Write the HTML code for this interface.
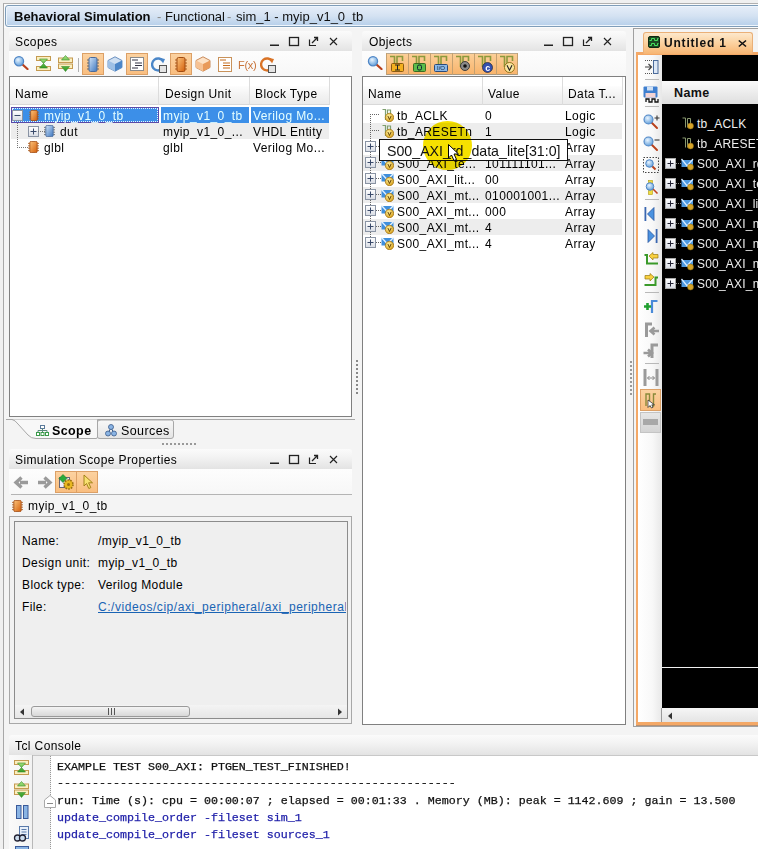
<!DOCTYPE html><html><head><meta charset="utf-8"><style>
*{margin:0;padding:0;box-sizing:border-box}
html,body{width:758px;height:849px;overflow:hidden;background:#f0f0f0;font-family:"Liberation Sans",sans-serif;font-size:12px;color:#000}
.a{position:absolute}
.t{position:absolute;white-space:nowrap;line-height:14px;letter-spacing:0.4px}
.ph{position:absolute;background:linear-gradient(#fbfbfb,#f3f3f3 40%,#e3e3e3)}
.tb{position:absolute;background:linear-gradient(#fdfdfd,#f7f7f7)}
.tbl{position:absolute;background:#fff;border:1px solid #808080}
.hdr{position:absolute;background:linear-gradient(#fdfdfd,#f3f3f3 50%,#ebebeb);border-bottom:1px solid #d8d8d8}
.cs{position:absolute;background:#dcdcdc}
.sel{position:absolute;background:#3c8fe8}
.alt{position:absolute;background:#ededed}
.tog{position:absolute;background:linear-gradient(#fcd2a0,#f9be80);border:1px solid #dca066}
.mono{font-family:"Liberation Mono",monospace;font-size:11.67px;line-height:14px}
svg{position:absolute;overflow:visible}
</style></head><body><svg width="0" height="0" style="position:absolute">
<defs>
<linearGradient id="gBlue" x1="0" y1="0" x2="1" y2="1"><stop offset="0" stop-color="#cfe2f7"/><stop offset="1" stop-color="#3f78c0"/></linearGradient>
<linearGradient id="gOr" x1="0" y1="0" x2="1" y2="1"><stop offset="0" stop-color="#fbc27a"/><stop offset="1" stop-color="#d4600c"/></linearGradient>
<linearGradient id="gGreen" x1="0" y1="0" x2="0" y2="1"><stop offset="0" stop-color="#9fe07a"/><stop offset="1" stop-color="#2f9a22"/></linearGradient>
<radialGradient id="gLens" cx="0.4" cy="0.35" r="0.7"><stop offset="0" stop-color="#e8f4ff"/><stop offset="1" stop-color="#5c9bd8"/></radialGradient>
<radialGradient id="gCoin" cx="0.4" cy="0.35" r="0.7"><stop offset="0" stop-color="#fff2a0"/><stop offset="1" stop-color="#d39a12"/></radialGradient>
<symbol id="mag" viewBox="0 0 16 14"><line x1="9.5" y1="8.5" x2="14.5" y2="13" stroke="#b8401c" stroke-width="2.2" stroke-linecap="round"/><circle cx="6" cy="5.2" r="4.6" fill="url(#gLens)" stroke="#4f86c6" stroke-width="1.2"/></symbol>
<symbol id="coll" viewBox="0 0 16 15"><rect x="0.5" y="0.5" width="14" height="4" fill="#fbefc0" stroke="#c49a50"/><rect x="0.5" y="10.5" width="14" height="4" fill="#fbefc0" stroke="#c49a50"/><path d="M3.5 3 L11.5 3 L7.5 7.5Z M3.5 12 L11.5 12 L7.5 7.5Z" fill="url(#gGreen)" stroke="#3a8a2a" stroke-width="0.6"/></symbol>
<symbol id="expd" viewBox="0 0 16 17"><rect x="0.5" y="3" width="14" height="4.5" fill="#fbefc0" stroke="#c49a50"/><rect x="0.5" y="9" width="14" height="4.5" fill="#fbefc0" stroke="#c49a50"/><path d="M3.5 5 L11.5 5 L7.5 0.5Z M3.5 11.5 L11.5 11.5 L7.5 16.5Z" fill="url(#gGreen)" stroke="#3a8a2a" stroke-width="0.6"/></symbol>
<symbol id="chipB" viewBox="0 0 12 15" preserveAspectRatio="none"><g stroke="#666" stroke-width="1"><line x1="0" y1="3" x2="2" y2="3"/><line x1="0" y1="6" x2="2" y2="6"/><line x1="0" y1="9" x2="2" y2="9"/><line x1="0" y1="12" x2="2" y2="12"/><line x1="10" y1="3" x2="12" y2="3"/><line x1="10" y1="6" x2="12" y2="6"/><line x1="10" y1="9" x2="12" y2="9"/><line x1="10" y1="12" x2="12" y2="12"/></g><rect x="2" y="0.5" width="8" height="14" rx="1.5" fill="url(#gBlue)" stroke="#4a6a9a"/></symbol>
<symbol id="chipO" viewBox="0 0 12 15" preserveAspectRatio="none"><g stroke="#b06020" stroke-width="1"><line x1="0" y1="3" x2="2" y2="3"/><line x1="0" y1="6" x2="2" y2="6"/><line x1="0" y1="9" x2="2" y2="9"/><line x1="0" y1="12" x2="2" y2="12"/><line x1="10" y1="3" x2="12" y2="3"/><line x1="10" y1="6" x2="12" y2="6"/><line x1="10" y1="9" x2="12" y2="9"/><line x1="10" y1="12" x2="12" y2="12"/></g><rect x="2" y="0.5" width="8" height="14" rx="1.5" fill="url(#gOr)" stroke="#a04a10"/></symbol>
<symbol id="cubeB" viewBox="0 0 16 16"><path d="M8 0.8 L15 4.5 L15 11.5 L8 15.2 L1 11.5 L1 4.5Z" fill="#cfe0f2" stroke="#6a8fbf"/><path d="M8 8 L15 4.5 L15 11.5 L8 15.2Z" fill="#4b86c8"/><path d="M1 4.5 L8 8 L8 15.2 L1 11.5Z" fill="#9dc0e6"/></symbol>
<symbol id="cubeO" viewBox="0 0 16 16"><path d="M8 0.8 L15 4.5 L15 11.5 L8 15.2 L1 11.5 L1 4.5Z" fill="#fde2c6" stroke="#c88a5a"/><path d="M8 8 L15 4.5 L15 11.5 L8 15.2Z" fill="#e99a5a"/><path d="M1 4.5 L8 8 L8 15.2 L1 11.5Z" fill="#f6c294"/></symbol>
<symbol id="page" viewBox="0 0 14 14"><rect x="0.5" y="0.5" width="13" height="13" fill="#fff" stroke="#8a8a8a"/><g stroke="#334" stroke-width="1"><line x1="2" y1="3" x2="8" y2="3"/><line x1="5" y1="6" x2="12" y2="6"/><line x1="5" y1="8.5" x2="12" y2="8.5"/><line x1="2" y1="11" x2="8" y2="11"/></g></symbol>
<symbol id="pageO" viewBox="0 0 14 15"><rect x="0.5" y="0.5" width="13" height="14" fill="#fff" stroke="#c9925a"/><g stroke="#c56a1a" stroke-width="1"><line x1="2" y1="3" x2="8" y2="3"/><line x1="5" y1="6" x2="12" y2="6"/><line x1="5" y1="8.5" x2="12" y2="8.5"/><line x1="5" y1="11" x2="12" y2="11"/></g></symbol>
<symbol id="refB" viewBox="0 0 16 16"><path d="M12 4 A6 6 0 1 0 11 12" fill="none" stroke="#4a86c8" stroke-width="2.4"/><path d="M9 1 L14 2 L12 6.5Z" fill="#4a86c8"/><rect x="8.5" y="8.5" width="7" height="7" fill="#e4e4e4" stroke="#555"/></symbol>
<symbol id="refO" viewBox="0 0 16 16"><path d="M12 4 A6 6 0 1 0 11 12" fill="none" stroke="#d97326" stroke-width="2.4"/><path d="M9 1 L14 2 L12 6.5Z" fill="#d97326"/><rect x="8.5" y="8.5" width="7" height="7" fill="#e4e4e4" stroke="#555"/></symbol>
<symbol id="plus" viewBox="0 0 11 11"><rect x="0.5" y="0.5" width="10" height="10" fill="url(#gBox)" stroke="#8a94a4"/><path d="M2.5 5.5 H8.5 M5.5 2.5 V8.5" stroke="#3a4a6a" stroke-width="1"/></symbol>
<symbol id="minus" viewBox="0 0 11 11"><rect x="0.5" y="0.5" width="10" height="10" fill="url(#gBox)" stroke="#8a94a4"/><path d="M2.5 5.5 H8.5" stroke="#3a4a6a" stroke-width="1"/></symbol>
<linearGradient id="gBox" x1="0" y1="0" x2="0" y2="1"><stop offset="0" stop-color="#ffffff"/><stop offset="1" stop-color="#d8dce4"/></linearGradient>
<symbol id="sig" viewBox="0 0 13 13"><path d="M1.5 0.5 H4.5 V11 M6.5 11 V1 H9.5 V5" fill="none" stroke="#7fa070" stroke-width="1.2"/><circle cx="8.5" cy="8.5" r="4.2" fill="url(#gCoin)" stroke="#a07010" stroke-width="0.7"/><path d="M6.9 7 L8.5 10.5 L10.1 7" fill="none" stroke="#5a3a00" stroke-width="0.9"/></symbol>
<symbol id="arr" viewBox="0 0 13 13"><path d="M0.5 1 L12.5 1 L12.5 8.5 L0.5 8.5Z" fill="#3f8fdc"/><path d="M0.5 0.5 L6.5 7 L12.5 0.5" fill="none" stroke="#dff0ff" stroke-width="1.4"/><circle cx="8.5" cy="8.5" r="4.2" fill="url(#gCoin)" stroke="#a07010" stroke-width="0.7"/><path d="M6.9 7 L8.5 10.5 L10.1 7" fill="none" stroke="#5a3a00" stroke-width="0.9"/></symbol>
</defs></svg>
<div class="a" style="left:3px;top:3px;width:760px;height:850px;border-left:1px solid #a8a8a8;border-top:1px solid #b0b0b0;background:#f4f4f4"></div>
<div class="a" style="left:4px;top:4px;width:760px;height:24px;background:#fbfbfb"></div>
<div class="a" style="left:5px;top:5px;width:760px;height:22px;border:1px solid #7f9db9;border-radius:3px;box-shadow:inset 0 0 0 1px #eef5fc;background:linear-gradient(#e6eef9,#d4e2f2 50%,#b6cfea)"></div>
<div class="t" style="left:14px;top:10px;font-size:13px;font-weight:bold;color:#0b0b0b;letter-spacing:0">Behavioral Simulation</div>
<div class="t" style="left:157px;top:10px;font-size:13px;color:#8a8a8a;letter-spacing:0">-</div>
<div class="t" style="left:165px;top:10px;font-size:13px;color:#111;letter-spacing:0">Functional</div>
<div class="t" style="left:227px;top:10px;font-size:13px;color:#8a8a8a;letter-spacing:0">-</div>
<div class="t" style="left:236px;top:10px;font-size:13px;color:#111;letter-spacing:0">sim_1 - myip_v1_0_tb</div>
<div class="ph" style="left:9px;top:31px;width:343px;height:20px;border-radius:3px 3px 0 0"></div>
<div class="t" style="left:15px;top:35px;">Scopes</div>
<svg style="left:270px;top:36px" width="70" height="12" viewBox="0 0 70 12"><rect x="0" y="8.5" width="9" height="1.5" fill="#222"/><rect x="19.5" y="1.5" width="9" height="8" fill="none" stroke="#222" stroke-width="1.3"/><path d="M39.5 3.5 V9.5 H46" fill="none" stroke="#222" stroke-width="1.2"/><path d="M42 7 L47 2 M44 1.5 H47.5 V5" fill="none" stroke="#222" stroke-width="1.3"/><path d="M60 2 L67 9 M67 2 L60 9" stroke="#222" stroke-width="1.15"/></svg>
<div class="tb" style="left:9px;top:51px;width:343px;height:25px;"></div>
<svg style="left:13px;top:56px" width="16" height="14"><use href="#mag" width="16" height="14"/></svg>
<svg style="left:36px;top:56px" width="16" height="15"><use href="#coll" width="16" height="15"/></svg>
<svg style="left:58px;top:55px" width="16" height="17"><use href="#expd" width="16" height="17"/></svg>
<div class="a" style="left:78px;top:58px;width:1px;height:14px;background:#b0b0b0"></div>
<div class="tog" style="left:82px;top:53px;width:22px;height:22px;"></div>
<svg style="left:87px;top:57px" width="12" height="15"><use href="#chipB" width="12" height="15"/></svg>
<svg style="left:107px;top:56px" width="16" height="16"><use href="#cubeB" width="16" height="16"/></svg>
<div class="tog" style="left:126px;top:53px;width:22px;height:22px;"></div>
<svg style="left:130px;top:57px" width="14" height="14"><use href="#page" width="14" height="14"/></svg>
<svg style="left:151px;top:57px" width="16" height="16"><use href="#refB" width="16" height="16"/></svg>
<div class="tog" style="left:170px;top:53px;width:22px;height:22px;"></div>
<svg style="left:175px;top:57px" width="12" height="15"><use href="#chipO" width="12" height="15"/></svg>
<svg style="left:195px;top:56px" width="16" height="16"><use href="#cubeO" width="16" height="16"/></svg>
<svg style="left:218px;top:57px" width="14" height="15"><use href="#pageO" width="14" height="15"/></svg>
<div class="t" style="left:238px;top:58px;font-size:11px;color:#c8743a;letter-spacing:-0.3px">F(x)</div>
<svg style="left:260px;top:57px" width="16" height="16"><use href="#refO" width="16" height="16"/></svg>
<div class="tbl" style="left:9px;top:76px;width:343px;height:341px;"></div>
<div class="hdr" style="left:10px;top:86px;width:319px;height:19px;"></div>
<div class="cs" style="left:158px;top:77px;width:1px;height:28px;"></div>
<div class="cs" style="left:249px;top:77px;width:1px;height:28px;"></div>
<div class="cs" style="left:329px;top:77px;width:1px;height:28px;"></div>
<div class="t" style="left:15px;top:87px;">Name</div>
<div class="t" style="left:165px;top:87px;">Design Unit</div>
<div class="t" style="left:255px;top:87px;">Block Type</div>
<div class="sel" style="left:11px;top:107px;width:148px;height:16px;border:1px solid #5a4aa8"></div>
<div class="a" style="left:12px;top:108px;width:146px;height:14px;border:1px dotted #e8f4ff"></div>
<div class="sel" style="left:161px;top:107px;width:88px;height:16px;"></div>
<div class="sel" style="left:251px;top:107px;width:78px;height:16px;"></div>
<div class="alt" style="left:11px;top:123px;width:318px;height:16px;"></div>
<svg style="left:12px;top:110px" width="11" height="11"><use href="#minus" width="11" height="11"/></svg>
<svg style="left:29px;top:110px" width="10" height="11"><use href="#chipO" width="10" height="11"/></svg>
<div class="t" style="left:44px;top:109px;color:#e6ffff">myip_v1_0_tb</div>
<div class="t" style="left:163px;top:109px;color:#e6ffff">myip_v1_0_tb</div>
<div class="t" style="left:253px;top:109px;color:#e6ffff">Verilog Mo...</div>
<svg style="left:16px;top:122px" width="20" height="30" viewBox="0 0 20 30"><path d="M1.5 1 V25 M1 25.5 H13" stroke="#777" stroke-width="1" stroke-dasharray="1 1" fill="none"/></svg>
<svg style="left:28px;top:126px" width="11" height="11"><use href="#plus" width="11" height="11"/></svg>
<svg style="left:38px;top:131px" width="8" height="1" viewBox="0 0 8 1"><path d="M0 0.5 H8" stroke="#777" stroke-dasharray="1 1"/></svg>
<svg style="left:44px;top:125px" width="11" height="12"><use href="#chipB" width="11" height="12"/></svg>
<div class="t" style="left:60px;top:125px;">dut</div>
<div class="t" style="left:163px;top:125px;">myip_v1_0_...</div>
<div class="t" style="left:253px;top:125px;">VHDL Entity</div>
<svg style="left:28px;top:141px" width="11" height="12"><use href="#chipO" width="11" height="12"/></svg>
<div class="t" style="left:44px;top:141px;">glbl</div>
<div class="t" style="left:163px;top:141px;">glbl</div>
<div class="t" style="left:253px;top:141px;">Verilog Mo...</div>
<svg style="left:356px;top:360px" width="2" height="36" viewBox="0 0 2 36"><path d="M1 0 V36" stroke="#888" stroke-width="2" stroke-dasharray="2 2"/></svg>
<div class="a" style="left:8px;top:419px;width:347px;height:1px;background:#a8a8a8"></div>
<svg style="left:6px;top:419px" width="172" height="21" viewBox="0 0 172 21"><path d="M0 0.5 L6 0.5 Q9 1 12 5 L22 16 Q25 19.5 30 19.5 L90 19.5 Q91.5 19.5 91.5 18 L91.5 0.5" fill="#f8f8f8" stroke="#a8a8a8"/><path d="M91.5 1.5 L91.5 18 Q91.5 19.5 94 19.5 L165 19.5 Q167.5 19.5 167.5 17 L167.5 3 Q167.5 1 165 1 L95 1 Q91.5 1 91.5 3" fill="url(#gTab)" stroke="#a8a8a8"/></svg>
<svg width="0" height="0" style="position:absolute"><defs><linearGradient id="gTab" x1="0" y1="0" x2="0" y2="1"><stop offset="0" stop-color="#f8f8f8"/><stop offset="1" stop-color="#e4e4e4"/></linearGradient></defs></svg>
<svg style="left:36px;top:425px" width="13" height="11" viewBox="0 0 13 11"><rect x="4.5" y="0.5" width="4" height="3" fill="#fff" stroke="#5a7a9a" stroke-width="1"/><path d="M6.5 3.5 V5.5 M2 5.5 H11 M2 5.5 V7 M6.5 5.5 V7 M11 5.5 V7" stroke="#5a8a7a" stroke-width="1" fill="none"/><g fill="#fff" stroke="#3a9a4a" stroke-width="1"><rect x="0.5" y="7.5" width="3" height="3"/><rect x="5" y="7.5" width="3" height="3"/><rect x="9.5" y="7.5" width="3" height="3"/></g></svg>
<div class="t" style="left:52px;top:424px;font-weight:bold;font-size:12.5px">Scope</div>
<svg style="left:105px;top:424px" width="12" height="13" viewBox="0 0 12 13"><path d="M6 4 L3 9 M6 4 L9 9" stroke="#3a5a8a" stroke-width="1"/><circle cx="6" cy="3" r="2.5" fill="#8ab4e4" stroke="#3a5a8a" stroke-width="0.8"/><circle cx="3" cy="9.5" r="2.5" fill="#8ab4e4" stroke="#3a5a8a" stroke-width="0.8"/><circle cx="9" cy="9.5" r="2.5" fill="#8ab4e4" stroke="#3a5a8a" stroke-width="0.8"/></svg>
<div class="t" style="left:121px;top:424px;font-size:12.5px">Sources</div>
<svg style="left:162px;top:443px" width="36" height="2" viewBox="0 0 36 2"><path d="M0 1 H36" stroke="#999" stroke-width="2" stroke-dasharray="2 2"/></svg>
<div class="ph" style="left:362px;top:31px;width:264px;height:20px;border-radius:3px 3px 0 0"></div>
<div class="t" style="left:369px;top:35px;">Objects</div>
<svg style="left:544px;top:36px" width="70" height="12" viewBox="0 0 70 12"><rect x="0" y="8.5" width="9" height="1.5" fill="#222"/><rect x="19.5" y="1.5" width="9" height="8" fill="none" stroke="#222" stroke-width="1.3"/><path d="M39.5 3.5 V9.5 H46" fill="none" stroke="#222" stroke-width="1.2"/><path d="M42 7 L47 2 M44 1.5 H47.5 V5" fill="none" stroke="#222" stroke-width="1.3"/><path d="M60 2 L67 9 M67 2 L60 9" stroke="#222" stroke-width="1.15"/></svg>
<div class="tb" style="left:362px;top:51px;width:264px;height:25px;"></div>
<svg style="left:367px;top:56px" width="16" height="14"><use href="#mag" width="16" height="14"/></svg>
<div class="a" style="left:386px;top:53px;width:132px;height:22px;background:linear-gradient(#fccf98,#f8b46c);border-top:1px solid #b8a890;border-bottom:1px solid #a89880"></div>
<div class="a" style="left:386px;top:53px;width:1px;height:22px;background:#c4a070"></div>
<div class="a" style="left:408px;top:53px;width:1px;height:22px;background:#c4a070"></div>
<div class="a" style="left:430px;top:53px;width:1px;height:22px;background:#c4a070"></div>
<div class="a" style="left:452px;top:53px;width:1px;height:22px;background:#c4a070"></div>
<div class="a" style="left:474px;top:53px;width:1px;height:22px;background:#c4a070"></div>
<div class="a" style="left:496px;top:53px;width:1px;height:22px;background:#c4a070"></div>
<div class="a" style="left:517px;top:53px;width:1px;height:22px;background:#c4a070"></div>
<div class="tbl" style="left:362px;top:76px;width:264px;height:649px;"></div>
<div class="hdr" style="left:363px;top:86px;width:259px;height:19px;"></div>
<div class="cs" style="left:482px;top:77px;width:1px;height:28px;"></div>
<div class="cs" style="left:562px;top:77px;width:1px;height:28px;"></div>
<div class="cs" style="left:622px;top:77px;width:1px;height:28px;"></div>
<div class="t" style="left:368px;top:87px;">Name</div>
<div class="t" style="left:488px;top:87px;">Value</div>
<div class="t" style="left:568px;top:87px;">Data T...</div>
<svg style="left:389px;top:55px" width="14" height="13" viewBox="0 0 14 13"><path d="M1 1.5 H5.5 V12 M8 10 V1.5 H13.5 V6" fill="none" stroke="#8c9a3c" stroke-width="1.6"/></svg>
<svg style="left:411px;top:55px" width="14" height="13" viewBox="0 0 14 13"><path d="M1 1.5 H5.5 V12 M8 10 V1.5 H13.5 V6" fill="none" stroke="#8c9a3c" stroke-width="1.6"/></svg>
<svg style="left:433px;top:55px" width="14" height="13" viewBox="0 0 14 13"><path d="M1 1.5 H5.5 V12 M8 10 V1.5 H13.5 V6" fill="none" stroke="#8c9a3c" stroke-width="1.6"/></svg>
<svg style="left:455px;top:55px" width="14" height="13" viewBox="0 0 14 13"><path d="M1 1.5 H5.5 V12 M8 10 V1.5 H13.5 V6" fill="none" stroke="#8c9a3c" stroke-width="1.6"/></svg>
<svg style="left:477px;top:55px" width="14" height="13" viewBox="0 0 14 13"><path d="M1 1.5 H5.5 V12 M8 10 V1.5 H13.5 V6" fill="none" stroke="#8c9a3c" stroke-width="1.6"/></svg>
<svg style="left:499px;top:55px" width="14" height="13" viewBox="0 0 14 13"><path d="M1 1.5 H5.5 V12 M8 10 V1.5 H13.5 V6" fill="none" stroke="#8c9a3c" stroke-width="1.6"/></svg>
<svg style="left:391px;top:63px" width="13" height="9" viewBox="0 0 13 9"><rect x="0.5" y="0.5" width="12" height="8" rx="1" fill="#f4b020" stroke="#8a5a10"/><path d="M4 2 H9 M6.5 2 V7 M4 7 H9" stroke="#222" stroke-width="1"/></svg>
<svg style="left:413px;top:63px" width="13" height="9" viewBox="0 0 13 9"><rect x="0.5" y="0.5" width="12" height="8" rx="1" fill="#5cbc4c" stroke="#3a6a20"/><rect x="4.5" y="2" width="4" height="5" rx="1.5" fill="none" stroke="#123" stroke-width="1"/></svg>
<svg style="left:434px;top:64px" width="14" height="8" viewBox="0 0 14 8"><rect x="0.5" y="0.5" width="13" height="7" rx="1" fill="#8ab8e8" stroke="#2a4a7a"/><text x="7" y="6.3" font-size="6" text-anchor="middle" fill="#123" font-family="Liberation Sans">I/O</text></svg>
<svg style="left:460px;top:61px" width="10" height="10" viewBox="0 0 10 10"><circle cx="5" cy="5" r="4.5" fill="#8a8a8a" stroke="#333" stroke-width="0.9"/><circle cx="5" cy="5" r="1.8" fill="#111"/></svg>
<svg style="left:482px;top:62px" width="11" height="11" viewBox="0 0 11 11"><circle cx="5.5" cy="5.5" r="5" fill="#3450b0" stroke="#223" stroke-width="0.7"/><text x="5.7" y="8.6" font-size="9" text-anchor="middle" fill="#fff" font-weight="bold" font-family="Liberation Sans">c</text></svg>
<svg style="left:504px;top:62px" width="11" height="11" viewBox="0 0 11 11"><circle cx="5.5" cy="5.5" r="5" fill="#fbe6a0" stroke="#8a6a10" stroke-width="0.9"/><path d="M3 3.2 L5.5 8.3 L8 3.2" fill="none" stroke="#222" stroke-width="1.1"/></svg>
<div class="alt" style="left:363px;top:123px;width:259px;height:16px;"></div>
<div class="alt" style="left:363px;top:155px;width:259px;height:16px;"></div>
<div class="alt" style="left:363px;top:187px;width:259px;height:16px;"></div>
<div class="alt" style="left:363px;top:219px;width:259px;height:16px;"></div>
<svg style="left:370px;top:114px" width="10" height="128" viewBox="0 0 10 128"><path d="M0.5 0 V126 M0 0.5 H9 M0 16.5 H9" stroke="#666" stroke-dasharray="1 1" fill="none"/></svg>
<svg style="left:381px;top:109px" width="13" height="13"><use href="#sig" width="13" height="13"/></svg>
<div class="t" style="left:397px;top:109px;">tb_ACLK</div>
<div class="t" style="left:485px;top:109px;">0</div>
<div class="t" style="left:565px;top:109px;">Logic</div>
<svg style="left:381px;top:125px" width="13" height="13"><use href="#sig" width="13" height="13"/></svg>
<div class="t" style="left:397px;top:125px;">tb_ARESETn</div>
<div class="t" style="left:485px;top:125px;">1</div>
<div class="t" style="left:565px;top:125px;">Logic</div>
<svg style="left:365px;top:141px" width="11" height="11"><use href="#plus" width="11" height="11"/></svg>
<svg style="left:376px;top:146px" width="5" height="1" viewBox="0 0 5 1"><path d="M0 0.5 H5" stroke="#666" stroke-dasharray="1 1"/></svg>
<svg style="left:381px;top:141px" width="13" height="13"><use href="#arr" width="13" height="13"/></svg>
<div class="t" style="left:397px;top:141px;">S00_AXI_rd...</div>
<div class="t" style="left:485px;top:141px;"></div>
<div class="t" style="left:565px;top:141px;">Array</div>
<svg style="left:365px;top:157px" width="11" height="11"><use href="#plus" width="11" height="11"/></svg>
<svg style="left:376px;top:162px" width="5" height="1" viewBox="0 0 5 1"><path d="M0 0.5 H5" stroke="#666" stroke-dasharray="1 1"/></svg>
<svg style="left:381px;top:157px" width="13" height="13"><use href="#arr" width="13" height="13"/></svg>
<div class="t" style="left:397px;top:157px;">S00_AXI_te...</div>
<div class="t" style="left:485px;top:157px;">101111101...</div>
<div class="t" style="left:565px;top:157px;">Array</div>
<svg style="left:365px;top:173px" width="11" height="11"><use href="#plus" width="11" height="11"/></svg>
<svg style="left:376px;top:178px" width="5" height="1" viewBox="0 0 5 1"><path d="M0 0.5 H5" stroke="#666" stroke-dasharray="1 1"/></svg>
<svg style="left:381px;top:173px" width="13" height="13"><use href="#arr" width="13" height="13"/></svg>
<div class="t" style="left:397px;top:173px;">S00_AXI_lit...</div>
<div class="t" style="left:485px;top:173px;">00</div>
<div class="t" style="left:565px;top:173px;">Array</div>
<svg style="left:365px;top:189px" width="11" height="11"><use href="#plus" width="11" height="11"/></svg>
<svg style="left:376px;top:194px" width="5" height="1" viewBox="0 0 5 1"><path d="M0 0.5 H5" stroke="#666" stroke-dasharray="1 1"/></svg>
<svg style="left:381px;top:189px" width="13" height="13"><use href="#arr" width="13" height="13"/></svg>
<div class="t" style="left:397px;top:189px;">S00_AXI_mt...</div>
<div class="t" style="left:485px;top:189px;">010001001...</div>
<div class="t" style="left:565px;top:189px;">Array</div>
<svg style="left:365px;top:205px" width="11" height="11"><use href="#plus" width="11" height="11"/></svg>
<svg style="left:376px;top:210px" width="5" height="1" viewBox="0 0 5 1"><path d="M0 0.5 H5" stroke="#666" stroke-dasharray="1 1"/></svg>
<svg style="left:381px;top:205px" width="13" height="13"><use href="#arr" width="13" height="13"/></svg>
<div class="t" style="left:397px;top:205px;">S00_AXI_mt...</div>
<div class="t" style="left:485px;top:205px;">000</div>
<div class="t" style="left:565px;top:205px;">Array</div>
<svg style="left:365px;top:221px" width="11" height="11"><use href="#plus" width="11" height="11"/></svg>
<svg style="left:376px;top:226px" width="5" height="1" viewBox="0 0 5 1"><path d="M0 0.5 H5" stroke="#666" stroke-dasharray="1 1"/></svg>
<svg style="left:381px;top:221px" width="13" height="13"><use href="#arr" width="13" height="13"/></svg>
<div class="t" style="left:397px;top:221px;">S00_AXI_mt...</div>
<div class="t" style="left:485px;top:221px;">4</div>
<div class="t" style="left:565px;top:221px;">Array</div>
<svg style="left:365px;top:237px" width="11" height="11"><use href="#plus" width="11" height="11"/></svg>
<svg style="left:376px;top:242px" width="5" height="1" viewBox="0 0 5 1"><path d="M0 0.5 H5" stroke="#666" stroke-dasharray="1 1"/></svg>
<svg style="left:381px;top:237px" width="13" height="13"><use href="#arr" width="13" height="13"/></svg>
<div class="t" style="left:397px;top:237px;">S00_AXI_mt...</div>
<div class="t" style="left:485px;top:237px;">4</div>
<div class="t" style="left:565px;top:237px;">Array</div>
<div class="a" style="left:423px;top:121px;width:49px;height:49px;border-radius:50%;background:#f6e100;mix-blend-mode:multiply"></div>
<div class="a" style="left:379px;top:139px;width:189px;height:22px;background:#fff;border:1px solid #111"></div>
<div class="a" style="left:423px;top:121px;width:49px;height:49px;border-radius:50%;background:#f6e100;mix-blend-mode:multiply;clip-path:inset(18px 0 9px 0)"></div>
<div class="t" style="left:387px;top:143px;font-size:14.2px;line-height:16px;color:#111;letter-spacing:0">S00_AXI_rd_data_lite[31:0]</div>
<svg style="left:448px;top:144px" width="12" height="18" viewBox="0 0 12 18"><path d="M0.5 0.5 L0.5 14 L3.5 11 L6 16.5 L8.5 15.5 L6 10 L10.5 10Z" fill="#fff" stroke="#000" stroke-width="1"/></svg>
<div class="a" style="left:633px;top:28px;width:130px;height:699px;border:1px solid #a0a0a0;background:#f4f4f4"></div>
<div class="a" style="left:636px;top:52px;width:130px;height:674px;background:#f4a866;border-bottom:1px solid #b89070"></div>
<div class="a" style="left:643px;top:32px;width:110px;height:22px;background:linear-gradient(#fde8cc,#fbd3a2 45%,#f7b572);border-radius:3px 3px 0 0;border:1px solid #eab078;border-bottom:none"></div>
<svg style="left:648px;top:36px" width="12" height="12" viewBox="0 0 12 12"><rect x="0.5" y="0.5" width="11" height="11" rx="1.5" fill="#1d4a24" stroke="#0e2a10"/><path d="M1.5 4.5 H3.5 V2.5 H6.5 V4.5 H9.5 V2.5 H10.5 M1.5 9.5 H3.5 V7.5 H6.5 V9.5 H9.5 V7.5 H10.5" stroke="#46e060" stroke-width="1" fill="none"/></svg>
<div class="t" style="left:664px;top:36px;font-weight:bold;color:#111;letter-spacing:0.8px">Untitled 1</div>
<svg style="left:738px;top:40px" width="9" height="7" viewBox="0 0 9 7"><path d="M0.8 0.5 L8 6.5 M8 0.5 L0.8 6.5" stroke="#111" stroke-width="1.6"/></svg>
<div class="a" style="left:638px;top:55px;width:24px;height:667px;background:linear-gradient(90deg,#fff,#f8f8f8 60%,#e8e8e8)"></div>
<div class="a" style="left:661px;top:708px;width:1px;height:14px;background:#9a9a9a"></div>
<div class="a" style="left:662px;top:55px;width:100px;height:653px;background:#000"></div>
<div class="a" style="left:662px;top:81px;width:100px;height:23px;background:linear-gradient(#fafafa,#ececec 50%,#dedede)"></div>
<div class="t" style="left:674px;top:86px;font-weight:bold;font-size:12.5px;color:#111">Name</div>
<svg style="left:681px;top:117px" width="13" height="13" viewBox="0 0 13 13"><path d="M1.5 1 H4.5 V10.5 M6.5 10.5 V1.5 H9.5 V6" fill="none" stroke="#8a9a70" stroke-width="1"/><circle cx="9.5" cy="9" r="3" fill="#d7a52a" stroke="#8a6a10" stroke-width="0.5"/></svg>
<div class="t" style="left:697px;top:117px;color:#eee;letter-spacing:0.2px">tb_ACLK</div>
<svg style="left:681px;top:137px" width="13" height="13" viewBox="0 0 13 13"><path d="M1.5 1 H4.5 V10.5 M6.5 10.5 V1.5 H9.5 V6" fill="none" stroke="#8a9a70" stroke-width="1"/><circle cx="9.5" cy="9" r="3" fill="#d7a52a" stroke="#8a6a10" stroke-width="0.5"/></svg>
<div class="t" style="left:697px;top:137px;color:#eee;letter-spacing:0.2px">tb_ARESETn</div>
<svg style="left:665px;top:158px" width="11" height="11" viewBox="0 0 11 11"><rect x="0.5" y="0.5" width="10" height="10" fill="url(#gBox)" stroke="#aaa"/><path d="M2.5 5.5 H8.5 M5.5 2.5 V8.5" stroke="#223" stroke-width="1"/></svg>
<svg style="left:676px;top:163px" width="5" height="1" viewBox="0 0 5 1"><path d="M0 0.5 H5" stroke="#888" stroke-dasharray="1 1"/></svg>
<svg style="left:681px;top:158px" width="13" height="12" viewBox="0 0 13 12"><path d="M0.5 2 L12 2 L12 9 L0.5 9Z" fill="#4f9ae0"/><path d="M0.5 1 L6.2 8 L12 1" fill="none" stroke="#d8ecff" stroke-width="1.3"/><circle cx="9.5" cy="9" r="3" fill="#d7a52a" stroke="#8a6a10" stroke-width="0.5"/></svg>
<div class="t" style="left:697px;top:157px;color:#eee;letter-spacing:0.2px">S00_AXI_rd</div>
<svg style="left:665px;top:178px" width="11" height="11" viewBox="0 0 11 11"><rect x="0.5" y="0.5" width="10" height="10" fill="url(#gBox)" stroke="#aaa"/><path d="M2.5 5.5 H8.5 M5.5 2.5 V8.5" stroke="#223" stroke-width="1"/></svg>
<svg style="left:676px;top:183px" width="5" height="1" viewBox="0 0 5 1"><path d="M0 0.5 H5" stroke="#888" stroke-dasharray="1 1"/></svg>
<svg style="left:681px;top:178px" width="13" height="12" viewBox="0 0 13 12"><path d="M0.5 2 L12 2 L12 9 L0.5 9Z" fill="#4f9ae0"/><path d="M0.5 1 L6.2 8 L12 1" fill="none" stroke="#d8ecff" stroke-width="1.3"/><circle cx="9.5" cy="9" r="3" fill="#d7a52a" stroke="#8a6a10" stroke-width="0.5"/></svg>
<div class="t" style="left:697px;top:177px;color:#eee;letter-spacing:0.2px">S00_AXI_te</div>
<svg style="left:665px;top:198px" width="11" height="11" viewBox="0 0 11 11"><rect x="0.5" y="0.5" width="10" height="10" fill="url(#gBox)" stroke="#aaa"/><path d="M2.5 5.5 H8.5 M5.5 2.5 V8.5" stroke="#223" stroke-width="1"/></svg>
<svg style="left:676px;top:203px" width="5" height="1" viewBox="0 0 5 1"><path d="M0 0.5 H5" stroke="#888" stroke-dasharray="1 1"/></svg>
<svg style="left:681px;top:198px" width="13" height="12" viewBox="0 0 13 12"><path d="M0.5 2 L12 2 L12 9 L0.5 9Z" fill="#4f9ae0"/><path d="M0.5 1 L6.2 8 L12 1" fill="none" stroke="#d8ecff" stroke-width="1.3"/><circle cx="9.5" cy="9" r="3" fill="#d7a52a" stroke="#8a6a10" stroke-width="0.5"/></svg>
<div class="t" style="left:697px;top:197px;color:#eee;letter-spacing:0.2px">S00_AXI_lit</div>
<svg style="left:665px;top:218px" width="11" height="11" viewBox="0 0 11 11"><rect x="0.5" y="0.5" width="10" height="10" fill="url(#gBox)" stroke="#aaa"/><path d="M2.5 5.5 H8.5 M5.5 2.5 V8.5" stroke="#223" stroke-width="1"/></svg>
<svg style="left:676px;top:223px" width="5" height="1" viewBox="0 0 5 1"><path d="M0 0.5 H5" stroke="#888" stroke-dasharray="1 1"/></svg>
<svg style="left:681px;top:218px" width="13" height="12" viewBox="0 0 13 12"><path d="M0.5 2 L12 2 L12 9 L0.5 9Z" fill="#4f9ae0"/><path d="M0.5 1 L6.2 8 L12 1" fill="none" stroke="#d8ecff" stroke-width="1.3"/><circle cx="9.5" cy="9" r="3" fill="#d7a52a" stroke="#8a6a10" stroke-width="0.5"/></svg>
<div class="t" style="left:697px;top:217px;color:#eee;letter-spacing:0.2px">S00_AXI_mt</div>
<svg style="left:665px;top:238px" width="11" height="11" viewBox="0 0 11 11"><rect x="0.5" y="0.5" width="10" height="10" fill="url(#gBox)" stroke="#aaa"/><path d="M2.5 5.5 H8.5 M5.5 2.5 V8.5" stroke="#223" stroke-width="1"/></svg>
<svg style="left:676px;top:243px" width="5" height="1" viewBox="0 0 5 1"><path d="M0 0.5 H5" stroke="#888" stroke-dasharray="1 1"/></svg>
<svg style="left:681px;top:238px" width="13" height="12" viewBox="0 0 13 12"><path d="M0.5 2 L12 2 L12 9 L0.5 9Z" fill="#4f9ae0"/><path d="M0.5 1 L6.2 8 L12 1" fill="none" stroke="#d8ecff" stroke-width="1.3"/><circle cx="9.5" cy="9" r="3" fill="#d7a52a" stroke="#8a6a10" stroke-width="0.5"/></svg>
<div class="t" style="left:697px;top:237px;color:#eee;letter-spacing:0.2px">S00_AXI_mt</div>
<svg style="left:665px;top:258px" width="11" height="11" viewBox="0 0 11 11"><rect x="0.5" y="0.5" width="10" height="10" fill="url(#gBox)" stroke="#aaa"/><path d="M2.5 5.5 H8.5 M5.5 2.5 V8.5" stroke="#223" stroke-width="1"/></svg>
<svg style="left:676px;top:263px" width="5" height="1" viewBox="0 0 5 1"><path d="M0 0.5 H5" stroke="#888" stroke-dasharray="1 1"/></svg>
<svg style="left:681px;top:258px" width="13" height="12" viewBox="0 0 13 12"><path d="M0.5 2 L12 2 L12 9 L0.5 9Z" fill="#4f9ae0"/><path d="M0.5 1 L6.2 8 L12 1" fill="none" stroke="#d8ecff" stroke-width="1.3"/><circle cx="9.5" cy="9" r="3" fill="#d7a52a" stroke="#8a6a10" stroke-width="0.5"/></svg>
<div class="t" style="left:697px;top:257px;color:#eee;letter-spacing:0.2px">S00_AXI_mt</div>
<svg style="left:665px;top:278px" width="11" height="11" viewBox="0 0 11 11"><rect x="0.5" y="0.5" width="10" height="10" fill="url(#gBox)" stroke="#aaa"/><path d="M2.5 5.5 H8.5 M5.5 2.5 V8.5" stroke="#223" stroke-width="1"/></svg>
<svg style="left:676px;top:283px" width="5" height="1" viewBox="0 0 5 1"><path d="M0 0.5 H5" stroke="#888" stroke-dasharray="1 1"/></svg>
<svg style="left:681px;top:278px" width="13" height="12" viewBox="0 0 13 12"><path d="M0.5 2 L12 2 L12 9 L0.5 9Z" fill="#4f9ae0"/><path d="M0.5 1 L6.2 8 L12 1" fill="none" stroke="#d8ecff" stroke-width="1.3"/><circle cx="9.5" cy="9" r="3" fill="#d7a52a" stroke="#8a6a10" stroke-width="0.5"/></svg>
<div class="t" style="left:697px;top:277px;color:#eee;letter-spacing:0.2px">S00_AXI_mt</div>
<div class="a" style="left:662px;top:667px;width:100px;height:1px;background:#f0f0f0"></div>
<div class="a" style="left:662px;top:708px;width:100px;height:14px;background:linear-gradient(#f6f6f6,#e4e4e4)"></div>
<svg style="left:667px;top:712px" width="6" height="8" viewBox="0 0 6 8"><path d="M5 0.5 L1 4 L5 7.5Z" fill="#333"/></svg>
<svg style="left:644px;top:59px" width="16" height="16" viewBox="0 0 16 16"><path d="M1 1.5 H8 M1 14.5 H8" stroke="#555" stroke-dasharray="1 1"/><path d="M1 8 H7 M4.5 5 L7.5 8 L4.5 11" stroke="#444" stroke-width="1.2" fill="none"/><rect x="9.5" y="1.5" width="4.5" height="13" fill="#dde8f6" stroke="#4a6a9a"/></svg>
<div class="a" style="left:645px;top:79px;width:14px;height:1px;background:#b8b8b8"></div>
<svg style="left:643px;top:86px" width="16" height="17" viewBox="0 0 16 17"><rect x="0.5" y="0.5" width="14" height="11" rx="1" fill="#3f7fcf"/><rect x="4" y="0.5" width="6" height="4" fill="#cfe0f4"/><rect x="2.5" y="7" width="10" height="4.5" fill="#f4d4d4"/><path d="M3 16 V13 H6 V16 H9 V13 H12 V16 H15 V13" fill="none" stroke="#111" stroke-width="1.3"/></svg>
<div class="a" style="left:645px;top:106px;width:14px;height:1px;background:#b8b8b8"></div>
<svg style="left:643px;top:114px" width="17" height="15" viewBox="0 0 17 15"><line x1="8" y1="8" x2="14" y2="14" stroke="#b8401c" stroke-width="2" stroke-linecap="round"/><circle cx="5.5" cy="5.5" r="4.5" fill="url(#gLens)" stroke="#4f86c6" stroke-width="1.1"/><path d="M11.5 4 H16.5 M14 1.5 V6.5" stroke="#333" stroke-width="1.1"/></svg>
<svg style="left:643px;top:136px" width="17" height="15" viewBox="0 0 17 15"><line x1="8" y1="8" x2="14" y2="14" stroke="#b8401c" stroke-width="2" stroke-linecap="round"/><circle cx="5.5" cy="5.5" r="4.5" fill="url(#gLens)" stroke="#4f86c6" stroke-width="1.1"/><path d="M11.5 4 H16.5" stroke="#333" stroke-width="1.1"/></svg>
<svg style="left:643px;top:157px" width="16" height="16" viewBox="0 0 16 16"><rect x="0.5" y="0.5" width="15" height="15" fill="none" stroke="#444" stroke-dasharray="1.5 1.5"/><line x1="8" y1="8" x2="12.5" y2="12.5" stroke="#b8401c" stroke-width="2"/><circle cx="6.5" cy="6.5" r="3.8" fill="url(#gLens)" stroke="#4f86c6" stroke-width="1"/></svg>
<svg style="left:645px;top:180px" width="14" height="15" viewBox="0 0 14 15"><rect x="3.5" y="0.5" width="4" height="14" fill="#f0dc40" stroke="#b09a10" stroke-width="0.6"/><line x1="7" y1="8" x2="12.5" y2="13.5" stroke="#c04020" stroke-width="1.6"/><circle cx="5" cy="6.5" r="3.8" fill="url(#gLens)" stroke="#4f86c6"/></svg>
<div class="a" style="left:645px;top:199px;width:14px;height:1px;background:#b8b8b8"></div>
<svg style="left:644px;top:207px" width="11" height="14" viewBox="0 0 11 14"><rect x="0.5" y="0" width="1.8" height="14" fill="#3a66b0"/><path d="M10 0.5 L3.5 7 L10 13.5Z" fill="#4a92e0" stroke="#2a56a0" stroke-width="0.8"/></svg>
<svg style="left:647px;top:229px" width="11" height="14" viewBox="0 0 11 14"><rect x="8.7" y="0" width="1.8" height="14" fill="#3a66b0"/><path d="M1 0.5 L7.5 7 L1 13.5Z" fill="#4a92e0" stroke="#2a56a0" stroke-width="0.8"/></svg>
<svg style="left:643px;top:252px" width="16" height="14" viewBox="0 0 16 14"><path d="M1.5 3 H4 V11.5 H15" fill="none" stroke="#3a9a2a" stroke-width="2"/><path d="M6 4 L10 0.5 V2.5 H15 V6 H10 V8Z" fill="#f8d040" stroke="#9a7a10" stroke-width="0.7"/></svg>
<svg style="left:643px;top:273px" width="16" height="14" viewBox="0 0 16 14"><path d="M1.5 12 H12.5 V4.5 H15" fill="none" stroke="#3a9a2a" stroke-width="2"/><path d="M11 4 L7 0.5 V2.5 H2 V6 H7 V8Z" fill="#f8d040" stroke="#9a7a10" stroke-width="0.7"/></svg>
<div class="a" style="left:645px;top:292px;width:14px;height:1px;background:#b8b8b8"></div>
<svg style="left:643px;top:298px" width="16" height="16" viewBox="0 0 16 16"><path d="M9 15 V3 H14.5" fill="none" stroke="#4a8ad8" stroke-width="2.2"/><path d="M1 8.5 H8 M4.5 5 V12" stroke="#22a030" stroke-width="2.6"/></svg>
<svg style="left:644px;top:322px" width="15" height="15" viewBox="0 0 15 15"><path d="M2.5 15 V2 H8" fill="none" stroke="#9a9a9a" stroke-width="3"/><path d="M15 9 H8 M10.5 5.5 L6.5 9 L10.5 12.5" stroke="#9a9a9a" stroke-width="2.6" fill="none"/></svg>
<svg style="left:643px;top:343px" width="16" height="15" viewBox="0 0 16 15"><path d="M9 15 V2 H15" fill="none" stroke="#9a9a9a" stroke-width="3"/><path d="M0.5 10 H8 M5 6.5 L9 10 L5 13.5" stroke="#9a9a9a" stroke-width="2.6" fill="none"/></svg>
<div class="a" style="left:645px;top:363px;width:14px;height:1px;background:#b8b8b8"></div>
<svg style="left:643px;top:369px" width="16" height="17" viewBox="0 0 16 17"><path d="M2 0 V17 M14 0 V17" stroke="#9a9a9a" stroke-width="3"/><path d="M4.5 9 H11.5 M6.5 7 L4.5 9 L6.5 11 M9.5 7 L11.5 9 L9.5 11" stroke="#888" stroke-width="1" fill="none"/></svg>
<div class="tog" style="left:640px;top:389px;width:21px;height:22px;"></div>
<svg style="left:644px;top:392px" width="14" height="16" viewBox="0 0 14 16"><path d="M2 14 V2 H5.5 V14 H9.5 V2 H12" fill="none" stroke="#8a8a3a" stroke-width="1.4"/><path d="M4 8 L4 15.5 L6 13.5 L7.5 16 L9 15.3 L7.8 12.8 L10.5 12.8Z" fill="#fff" stroke="#222" stroke-width="0.7"/></svg>
<div class="a" style="left:640px;top:412px;width:21px;height:21px;background:linear-gradient(#e6e6e6,#d4d4d4);border:1px solid #c4c4c4"></div>
<div class="a" style="left:643px;top:419px;width:15px;height:6px;background:#a8a8a8"></div>
<svg style="left:630px;top:361px" width="2" height="34" viewBox="0 0 2 34"><path d="M1 0 V36" stroke="#999" stroke-width="2" stroke-dasharray="2 2"/></svg>
<div class="ph" style="left:9px;top:449px;width:343px;height:20px;border-radius:3px 3px 0 0"></div>
<div class="t" style="left:15px;top:453px;">Simulation Scope Properties</div>
<svg style="left:270px;top:454px" width="70" height="12" viewBox="0 0 70 12"><rect x="0" y="8.5" width="9" height="1.5" fill="#222"/><rect x="19.5" y="1.5" width="9" height="8" fill="none" stroke="#222" stroke-width="1.3"/><path d="M39.5 3.5 V9.5 H46" fill="none" stroke="#222" stroke-width="1.2"/><path d="M42 7 L47 2 M44 1.5 H47.5 V5" fill="none" stroke="#222" stroke-width="1.3"/><path d="M60 2 L67 9 M67 2 L60 9" stroke="#222" stroke-width="1.15"/></svg>
<div class="tb" style="left:9px;top:469px;width:343px;height:25px;"></div>
<svg style="left:14px;top:476px" width="15" height="13" viewBox="0 0 15 13"><path d="M14 6.5 H6 M7.5 1.5 L2 6.5 L7.5 11.5" stroke="#9a9a9a" stroke-width="3.4" fill="none" stroke-linejoin="miter"/></svg>
<svg style="left:37px;top:476px" width="15" height="13" viewBox="0 0 15 13"><path d="M1 6.5 H9 M7.5 1.5 L13 6.5 L7.5 11.5" stroke="#9a9a9a" stroke-width="3.4" fill="none"/></svg>
<div class="tog" style="left:55px;top:471px;width:22px;height:22px;"></div>
<div class="tog" style="left:76px;top:471px;width:22px;height:22px;"></div>
<svg style="left:58px;top:474px" width="16" height="16" viewBox="0 0 16 16"><rect x="1.5" y="3.5" width="10" height="10" fill="#eef" stroke="#667"/><path d="M5 0.5 L9 4.5 L5 8.5 L1 4.5Z" fill="#2aaa3a" stroke="#1a7a2a" stroke-width="0.6"/><circle cx="10.5" cy="10.5" r="4.5" fill="#e8b820" stroke="#9a7010" stroke-width="1.6" stroke-dasharray="1.6 1.2"/><circle cx="10.5" cy="10.5" r="1.5" fill="#9a7010"/></svg>
<svg style="left:83px;top:474px" width="12" height="16" viewBox="0 0 12 16"><path d="M1 1 L1 12 L3.5 9.5 L5.8 14.5 L7.8 13.6 L5.6 8.8 L9.5 8.8Z" fill="#f8e070" stroke="#9a7a10" stroke-width="0.9"/></svg>
<div class="a" style="left:11px;top:494px;width:341px;height:1px;background:#b4b4b4"></div>
<svg style="left:12px;top:500px" width="11" height="12"><use href="#chipO" width="11" height="12"/></svg>
<div class="t" style="left:28px;top:499px;">myip_v1_0_tb</div>
<div class="a" style="left:9px;top:516px;width:343px;height:208px;border:1px solid #a8a8a8;background:#f2f2f2"></div>
<div class="a" style="left:14px;top:521px;width:334px;height:198px;border:1px solid #8c8c8c;background:#efefef"></div>
<div class="t" style="left:22px;top:534px;">Name:</div>
<div class="t" style="left:98px;top:534px;">/myip_v1_0_tb</div>
<div class="t" style="left:22px;top:556px;">Design unit:</div>
<div class="t" style="left:98px;top:556px;">myip_v1_0_tb</div>
<div class="t" style="left:22px;top:578px;">Block type:</div>
<div class="t" style="left:98px;top:578px;">Verilog Module</div>
<div class="t" style="left:22px;top:600px;">File:</div>
<div class="a" style="left:15px;top:590px;width:331px;height:30px;overflow:hidden"><div class="t" style="left:83px;top:10px;color:#1a64b4;text-decoration:underline;letter-spacing:0.55px">C:/videos/cip/axi_peripheral/axi_peripheral</div></div>
<div class="a" style="left:15px;top:705px;width:332px;height:13px;background:linear-gradient(#f4f4f4,#e6e6e6)"></div>
<svg style="left:19px;top:708px" width="6" height="8" viewBox="0 0 6 8"><path d="M5 0.5 L1 4 L5 7.5Z" fill="#333"/></svg>
<svg style="left:337px;top:708px" width="6" height="8" viewBox="0 0 6 8"><path d="M1 0.5 L5 4 L1 7.5Z" fill="#333"/></svg>
<div class="a" style="left:31px;top:706px;width:159px;height:11px;border:1px solid #9a9a9a;border-radius:3px;background:linear-gradient(#f4f4f4,#d8d8d8)"></div>
<svg style="left:107px;top:708px" width="9" height="7" viewBox="0 0 9 7"><path d="M1.5 0 V7 M4.5 0 V7 M7.5 0 V7" stroke="#555" stroke-width="1"/></svg>
<div class="ph" style="left:9px;top:735px;width:760px;height:20px;border-radius:3px 3px 0 0"></div>
<div class="t" style="left:15px;top:739px;">Tcl Console</div>
<div class="a" style="left:9px;top:755px;width:24px;height:100px;background:linear-gradient(90deg,#fafafa,#f2f2f2)"></div>
<div class="a" style="left:32px;top:755px;width:1px;height:100px;background:#b8b8b8"></div>
<div class="a" style="left:33px;top:755px;width:730px;height:1px;background:#c8c8c8"></div>
<div class="a" style="left:33px;top:756px;width:18px;height:100px;background:#f0f0f0"></div>
<svg style="left:50px;top:756px" width="1" height="100" viewBox="0 0 1 100"><path d="M0.5 0 V100" stroke="#999" stroke-dasharray="1 1"/></svg>
<div class="a" style="left:51px;top:756px;width:720px;height:100px;background:#fff"></div>
<svg style="left:14px;top:760px" width="16" height="15"><use href="#coll" width="16" height="15"/></svg>
<svg style="left:14px;top:781px" width="16" height="17"><use href="#expd" width="16" height="17"/></svg>
<svg style="left:16px;top:805px" width="13" height="14" viewBox="0 0 13 14"><rect x="0.5" y="0.5" width="4.5" height="13" fill="#8ab4e4" stroke="#3a5a9a"/><rect x="7.5" y="0.5" width="4.5" height="13" fill="#8ab4e4" stroke="#3a5a9a"/></svg>
<svg style="left:14px;top:826px" width="16" height="16" viewBox="0 0 16 16"><rect x="5.5" y="0.5" width="9" height="12" fill="#e8f0fa" stroke="#5a7aaa"/><path d="M7.5 3.5 H12.5 M7.5 6 H12.5 M7.5 8.5 H12.5" stroke="#5a7aaa"/><circle cx="3.5" cy="12" r="3" fill="#cde" stroke="#223" stroke-width="1.3"/><circle cx="8.5" cy="12" r="3" fill="#cde" stroke="#223" stroke-width="1.3"/></svg>
<svg style="left:15px;top:846px" width="14" height="4" viewBox="0 0 14 4"><rect x="0.5" y="0.5" width="13" height="6" fill="#8ab4e4" stroke="#3a5a9a"/></svg>
<svg style="left:44px;top:795px" width="12" height="13" viewBox="0 0 12 13"><path d="M0.5 12.5 V5 L6 0.5 L11.5 5 V12.5Z" fill="#fff" stroke="#aaa"/><path d="M3 8.5 H9" stroke="#888"/></svg>
<div class="t" style="left:57px;top:760px;font-family:Liberation Mono,monospace;font-size:11.67px;letter-spacing:0;-webkit-text-stroke:0.25px;color:#111">EXAMPLE TEST S00_AXI: PTGEN_TEST_FINISHED!</div>
<div class="t" style="left:57px;top:776px;font-family:Liberation Mono,monospace;font-size:11.67px;letter-spacing:0;-webkit-text-stroke:0.25px;color:#111">---------------------------------------------------------</div>
<div class="t" style="left:57px;top:794px;font-family:Liberation Mono,monospace;font-size:11.67px;letter-spacing:0;-webkit-text-stroke:0.25px;color:#111">run: Time (s): cpu = 00:00:07 ; elapsed = 00:01:33 . Memory (MB): peak = 1142.609 ; gain = 13.500</div>
<div class="t" style="left:57px;top:811px;font-family:Liberation Mono,monospace;font-size:11.67px;letter-spacing:0;-webkit-text-stroke:0.25px;color:#2222aa">update_compile_order -fileset sim_1</div>
<div class="t" style="left:57px;top:828px;font-family:Liberation Mono,monospace;font-size:11.67px;letter-spacing:0;-webkit-text-stroke:0.25px;color:#2222aa">update_compile_order -fileset sources_1</div></body></html>
